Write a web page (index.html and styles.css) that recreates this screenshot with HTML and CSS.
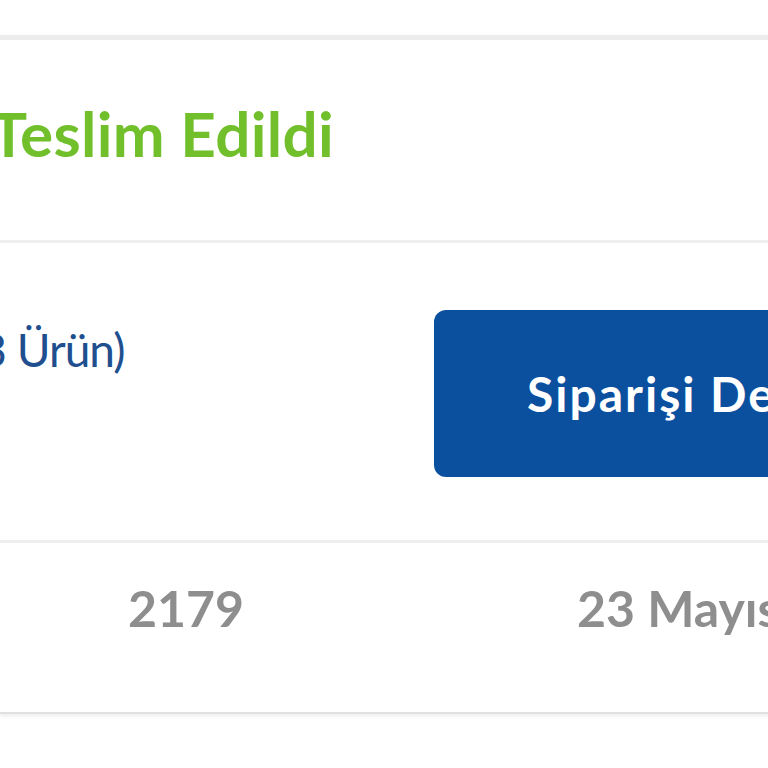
FILE: index.html
```html
<!DOCTYPE html>
<html lang="tr">
<head>
<meta charset="utf-8">
<title>Sipariş</title>
<link rel="stylesheet" href="styles.css">
</head>
<body>
<div class="page">
  <div class="card">
    <div class="status">
      <h1 class="status-title">Teslim Edildi</h1>
    </div>
    <div class="summary">
      <span class="count">(3 Ürün)</span>
      <button class="detail-btn">Siparişi Detayı</button>
    </div>
    <div class="meta">
      <span class="order-no">2179</span>
      <span class="date">23 Mayıs 2023</span>
    </div>
  </div>
</div>
</body>
</html>
```

FILE: styles.css
```css
html, body {
  margin: 0;
  padding: 0;
  background: #ffffff;
}
body {
  width: 768px;
  height: 768px;
  overflow: hidden;
  font-family: "Lato", "Open Sans", sans-serif;
}
.page {
  padding-top: 35px;
}
.card {
  width: 1200px;
  background: #ffffff;
  border-top: 5px solid #ececec;
  border-bottom: 2px solid #e0e0e0;
  box-shadow: 0 2px 4px rgba(0, 0, 0, 0.08);
}
.status {
  height: 203px;
  box-sizing: border-box;
  padding-top: 56px;
  border-bottom: 3px solid #efefef;
}
.status-title {
  margin: 0 0 0 -10px;
  font-size: 62px;
  line-height: 1.2;
  font-weight: 700;
  color: #70bf2b;
  letter-spacing: 0.3px;
}
.summary {
  height: 297px;
  display: grid;
  grid-template-columns: 434px 1fr;
  align-items: start;
  border-bottom: 3px solid #efefef;
}
.count {
  margin-top: 79px;
  margin-left: -31px;
  font-size: 46px;
  line-height: 1.2;
  letter-spacing: -1px;
  color: #1f4f8f;
  white-space: nowrap;
}
.detail-btn {
  margin-top: 67px;
  width: 560px;
  height: 167px;
  border: 0;
  border-radius: 12px;
  background: #0b509f;
  color: #ffffff;
  font-family: "Lato", sans-serif;
  font-size: 48px;
  font-weight: 700;
  letter-spacing: 2px;
  text-align: left;
  padding: 0 0 0 93px;
  white-space: nowrap;
}
.meta {
  height: 169px;
  display: grid;
  grid-template-columns: 577px 1fr;
  align-items: start;
}
.order-no, .date {
  margin-top: 35px;
  font-size: 50px;
  line-height: 1.2;
  font-weight: 700;
  color: #8e8e8e;
  white-space: nowrap;
}
.order-no {
  padding-left: 128px;
}
```
